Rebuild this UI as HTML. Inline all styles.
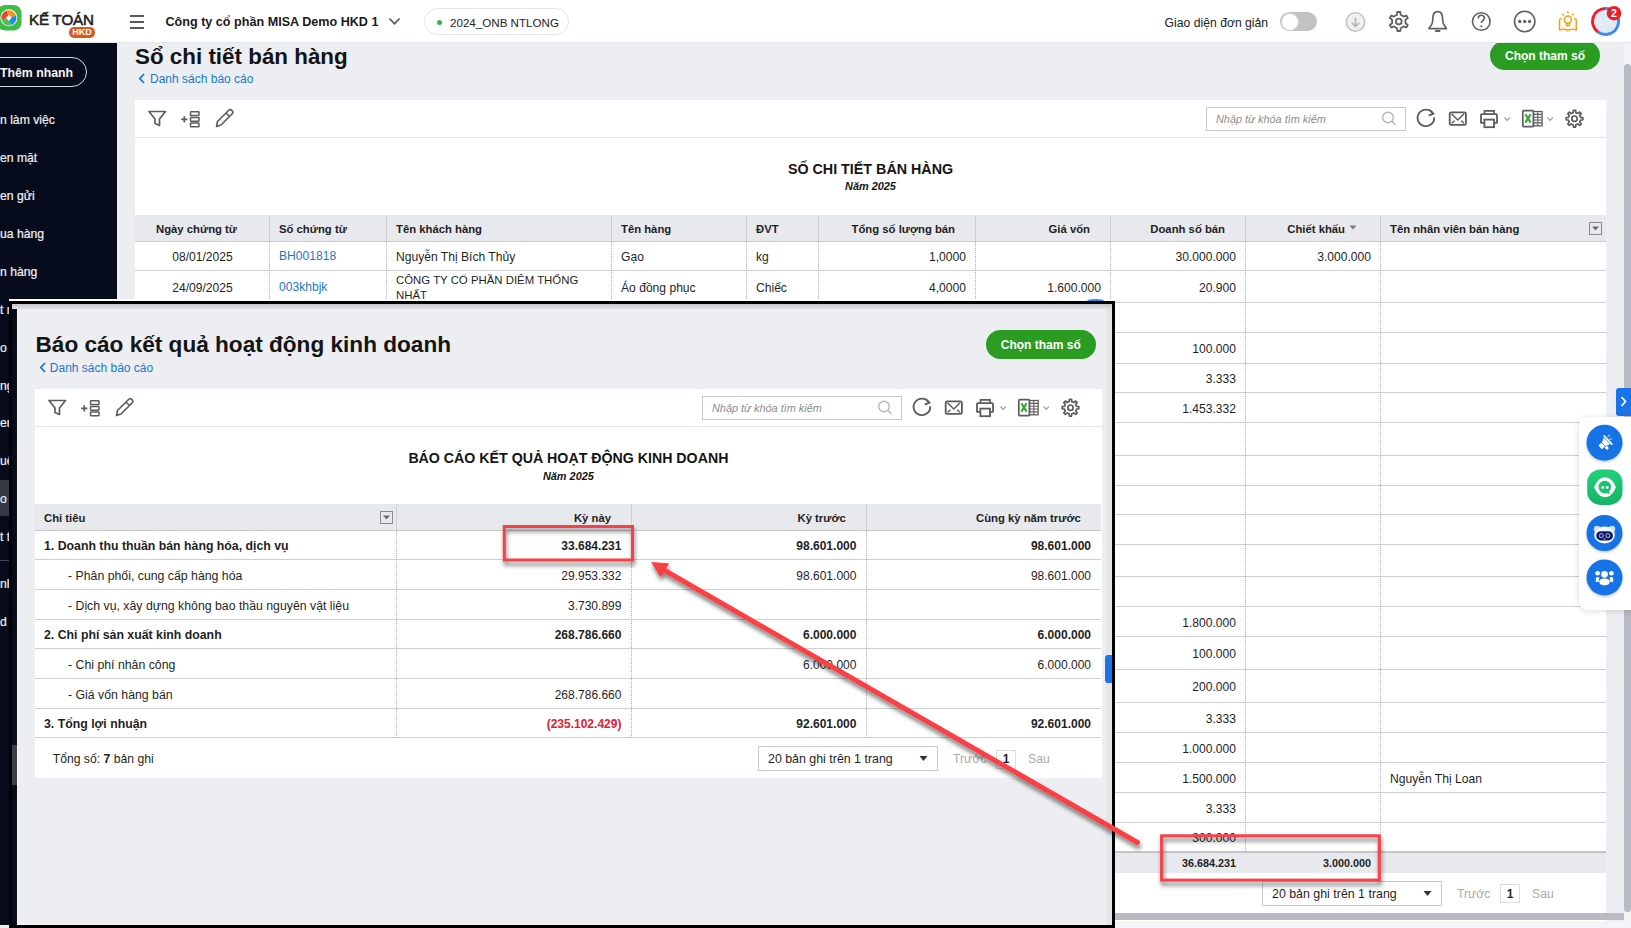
<!DOCTYPE html>
<html><head><meta charset="utf-8">
<style>
*{box-sizing:border-box;margin:0;padding:0}
html,body{width:1631px;height:928px;overflow:hidden;background:#eceef1;font-family:"Liberation Sans",sans-serif;color:#1f1f1f;position:relative}
.a{position:absolute}
.t{position:absolute;white-space:nowrap;line-height:1}
svg{overflow:visible}
</style></head><body>
<div class="a" style="left:0px;top:0px;width:1631px;height:43px;background:#fff;"></div>
<div class="a" style="left:0px;top:42px;width:1631px;height:1px;background:#e4e6ea;"></div>
<svg class="a" style="left:-3px;top:5px;" width="26" height="26" viewBox="0 0 26 26"><rect x="0" y="0" width="24.5" height="25.5" rx="8" fill="#3fbb47"/><circle cx="11.9" cy="12.8" r="8.5" fill="#fff"/><path d="M11.9 12.8 L9.93 5.46 A7.6 7.6 0 0 1 19.24 10.83 Z" fill="#f7941d"/><path d="M11.9 12.8 L19.24 10.83 A7.6 7.6 0 0 1 13.87 20.14 Z" fill="#1e88e5"/><path d="M11.9 12.8 L13.87 20.14 A7.6 7.6 0 0 1 4.56 14.77 Z" fill="#43c453"/><path d="M11.9 12.8 L4.56 14.77 A7.6 7.6 0 0 1 9.93 5.46 Z" fill="#ef4136"/><rect x="9.8" y="10.700000000000001" width="4.2" height="4.2" fill="#fff" transform="rotate(45 11.9 12.8)"/></svg>
<div class="t" style="top:11.83px;font-size:15.2px;color:#222;left:29px;-webkit-text-stroke:0.55px #222;letter-spacing:-0.2px;">KẾ TOÁN</div>
<div class="a" style="left:69px;top:27px;width:26px;height:10.5px;background:#dc5a1e;border-radius:5px"></div>
<div class="t" style="top:28.38px;font-size:9px;font-weight:bold;color:#fff;left:69px;width:26px;text-align:center;">HKD</div>
<div class="a" style="left:130px;top:15px;width:13.5px;height:1.6px;background:#5a5a5a;"></div>
<div class="a" style="left:130px;top:21px;width:13.5px;height:1.6px;background:#5a5a5a;"></div>
<div class="a" style="left:130px;top:27px;width:13.5px;height:1.6px;background:#5a5a5a;"></div>
<div class="t" style="top:15.63px;font-size:12.6px;font-weight:bold;color:#1a1a1a;left:165.5px;">Công ty cổ phần MISA Demo HKD 1</div>
<svg class="a" style="left:388px;top:17px;" width="13" height="9" viewBox="0 0 13 9"><path d="M1.5 1.5 L6.5 6.8 L11.5 1.5" fill="none" stroke="#555" stroke-width="1.6"/></svg>
<div class="a" style="left:424px;top:8px;width:145px;height:27px;background:#fff;border:1px solid #e3e4e6;border-radius:14px"></div>
<div class="a" style="left:437px;top:19.5px;width:5px;height:5px;background:#3cb04a;border-radius:50%"></div>
<div class="t" style="top:17.18px;font-size:11.6px;color:#222;left:450px;">2024_ONB NTLONG</div>
<div class="t" style="top:17.27px;font-size:12.2px;color:#222;left:1164.6px;">Giao diện đơn giản</div>
<div class="a" style="left:1280px;top:12.3px;width:37px;height:18.5px;background:#c2c2c2;border-radius:9.5px"></div>
<div class="a" style="left:1280.5px;top:12.6px;width:18px;height:18px;background:#fff;border-radius:50%;border:1px solid #d0d0d0"></div>
<svg class="a" style="left:1345px;top:11.5px;" width="21" height="21" viewBox="0 0 21 21"><circle cx="10.5" cy="10" r="9.2" fill="#f0f0f0" stroke="#c4c4c4" stroke-width="1.6"/><path d="M10.5 5.5 V14 M6.8 10.8 L10.5 14.3 L14.2 10.8" fill="none" stroke="#b5b5b5" stroke-width="1.6"/></svg>
<svg class="a" style="left:0px;top:0px;" width="1" height="1" viewBox="0 0 1 1"></svg>
<svg class="a" style="left:0;top:0" width="1631" height="43"><path d="M1396.94 14.84 L1397.30 12.02 L1400.30 12.02 L1400.66 14.84 L1403.64 16.56 L1406.26 15.46 L1407.76 18.06 L1405.49 19.78 L1405.49 23.22 L1407.76 24.94 L1406.26 27.54 L1403.64 26.44 L1400.66 28.16 L1400.30 30.98 L1397.30 30.98 L1396.94 28.16 L1393.96 26.44 L1391.34 27.54 L1389.84 24.94 L1392.11 23.22 L1392.11 19.78 L1389.84 18.06 L1391.34 15.46 L1393.96 16.56Z" fill="none" stroke="#606060" stroke-width="1.8" stroke-linejoin="round"/><circle cx="1398.8" cy="21.5" r="2.88" fill="none" stroke="#606060" stroke-width="1.8"/><path d="M1429 28.6 C1429 27 1432 26 1432.5 22 L1432.9 17.2 C1433.2 13.6 1435 11.6 1437.7 11.6 C1440.4 11.6 1442.2 13.6 1442.5 17.2 L1442.9 22 C1443.4 26 1446.4 27 1446.4 28.6 Z" fill="none" stroke="#606060" stroke-width="1.7" stroke-linejoin="round"/><path d="M1435.8 31 H1439.6" stroke="#606060" stroke-width="1.8" stroke-linecap="round"/><circle cx="1481.3" cy="21.5" r="8.8" fill="none" stroke="#606060" stroke-width="1.6"/><path d="M1478.3 18.5 C1478.3 16.3 1479.7 15.3 1481.3 15.3 C1483 15.3 1484.3 16.4 1484.3 18.2 C1484.3 20.5 1481.3 20.6 1481.3 23" fill="none" stroke="#606060" stroke-width="1.6"/><circle cx="1481.3" cy="26.3" r="1" fill="#606060"/><circle cx="1524.7" cy="21.5" r="10.2" fill="none" stroke="#606060" stroke-width="1.6"/><circle cx="1519.8" cy="21.5" r="1.65" fill="#606060"/><circle cx="1524.7" cy="21.5" r="1.65" fill="#606060"/><circle cx="1529.6" cy="21.5" r="1.65" fill="#606060"/><g fill="none" stroke="#f5a11d" stroke-width="1.6" stroke-linecap="round" stroke-linejoin="round"><path d="M1561 18.5 C1560 18.8 1559.5 19.5 1559.5 20.5 V30 C1562.5 28.8 1565.3 29 1567.9 30.6 C1570.5 29 1573.3 28.8 1576.3 30 V20.5 C1576.3 19.5 1575.8 18.8 1574.8 18.5"/><circle cx="1567.9" cy="19.6" r="3.6"/><path d="M1566.4 23.3 V25.6 H1569.4 V23.3"/></g><circle cx="1567.9" cy="12.2" r="0.95" fill="#f5a11d"/><path d="M1562.6 14.3 L1563.4 14.9 M1573.2 14.3 L1572.4 14.9" stroke="#f5a11d" stroke-width="1.5" stroke-linecap="round"/><circle cx="1605.5" cy="21.4" r="13" fill="#dfeaf4"/><path d="M1605.5 8.4 A13 13 0 1 1 1598 32" fill="none" stroke="#3b8beb" stroke-width="3"/><path d="M1598 32 A13 13 0 0 1 1605.5 8.4" fill="none" stroke="#e8202a" stroke-width="3"/><text x="1605.5" y="25" font-size="10" font-weight="bold" fill="#fff" fill-opacity="0.35" text-anchor="middle" font-family="Liberation Sans">LA</text><circle cx="1614" cy="13.2" r="7.3" fill="#e8202a"/><text x="1614" y="17" font-size="10.5" font-weight="bold" fill="#fff" text-anchor="middle" font-family="Liberation Sans">2</text></svg>
<div class="a" style="left:0px;top:43px;width:117px;height:885px;background:#070c1c;"></div>
<div class="a" style="left:-30px;top:57px;width:117px;height:29.5px;background:transparent;border:1.5px solid #d5d8de;border-radius:15px"></div>
<div class="t" style="top:66.89px;font-size:12.3px;font-weight:bold;color:#f4f4f4;left:0px;">Thêm nhanh</div>
<div class="a" style="left:0px;top:480px;width:117px;height:36px;background:#343944;"></div>
<div class="a" style="left:0px;top:559.5px;width:117px;height:1px;background:#444a55;"></div>
<div class="t" style="top:113.87px;font-size:12.2px;color:#f0f0f2;left:0px;-webkit-text-stroke:0.2px #f0f0f2;">n làm việc</div>
<div class="t" style="top:152.37px;font-size:12.2px;color:#f0f0f2;left:0px;-webkit-text-stroke:0.2px #f0f0f2;">en mặt</div>
<div class="t" style="top:190.37px;font-size:12.2px;color:#f0f0f2;left:0px;-webkit-text-stroke:0.2px #f0f0f2;">en gửi</div>
<div class="t" style="top:227.87px;font-size:12.2px;color:#f0f0f2;left:0px;-webkit-text-stroke:0.2px #f0f0f2;">ua hàng</div>
<div class="t" style="top:265.87px;font-size:12.2px;color:#f0f0f2;left:0px;-webkit-text-stroke:0.2px #f0f0f2;">n hàng</div>
<div class="t" style="top:303.87px;font-size:12.2px;color:#f0f0f2;left:0px;-webkit-text-stroke:0.2px #f0f0f2;">t r</div>
<div class="t" style="top:341.87px;font-size:12.2px;color:#f0f0f2;left:0px;-webkit-text-stroke:0.2px #f0f0f2;">o</div>
<div class="t" style="top:379.87px;font-size:12.2px;color:#f0f0f2;left:0px;-webkit-text-stroke:0.2px #f0f0f2;">ng</div>
<div class="t" style="top:416.87px;font-size:12.2px;color:#f0f0f2;left:0px;-webkit-text-stroke:0.2px #f0f0f2;">en</div>
<div class="t" style="top:454.87px;font-size:12.2px;color:#f0f0f2;left:0px;-webkit-text-stroke:0.2px #f0f0f2;">uế</div>
<div class="t" style="top:492.87px;font-size:12.2px;color:#f0f0f2;left:0px;-webkit-text-stroke:0.2px #f0f0f2;">o</div>
<div class="t" style="top:530.87px;font-size:12.2px;color:#f0f0f2;left:0px;-webkit-text-stroke:0.2px #f0f0f2;">t tổ</div>
<div class="t" style="top:577.87px;font-size:12.2px;color:#f0f0f2;left:0px;-webkit-text-stroke:0.2px #f0f0f2;">nh</div>
<div class="t" style="top:615.87px;font-size:12.2px;color:#f0f0f2;left:0px;-webkit-text-stroke:0.2px #f0f0f2;">d</div>
<div class="a" style="left:117px;top:43px;width:1514px;height:885px;background:#eceef1;"></div>
<div class="t" style="top:45.54px;font-size:22.4px;font-weight:bold;color:#141414;left:135px;">Sổ chi tiết bán hàng</div>
<svg class="a" style="left:138px;top:73px;" width="8" height="11" viewBox="0 0 8 11"><path d="M6 1 L1.8 5.5 L6 10" fill="none" stroke="#1b78c8" stroke-width="1.8"/></svg>
<div class="t" style="top:72.84px;font-size:12px;color:#1b78c8;left:150px;">Danh sách báo cáo</div>
<div class="a" style="left:1490px;top:43px;width:110px;height:27px;overflow:hidden"><div class="a" style="left:0;top:-2px;width:110px;height:29px;border-radius:14.5px;background:#2b9c22"></div></div>
<div class="t" style="top:50.14px;font-size:12px;font-weight:bold;color:#fff;left:1145px;width:800px;text-align:center;">Chọn tham số</div>
<div class="a" style="left:135px;top:100px;width:1471px;height:821px;background:#fff;"></div>
<svg class="a" style="left:0;top:0" width="1631" height="928"><path d="M149 111.5 H165.5 L159.5 119 V125.5 L155 123.5 V119 Z" fill="none" stroke="#5c5c5c" stroke-width="1.7" stroke-linejoin="round"/><path d="M184.3 116.3 V122.5 M181.2 119.4 H187.4" stroke="#5c5c5c" stroke-width="1.7"/><rect x="190.5" y="111.8" width="8.5" height="3.8" rx="0.6" fill="none" stroke="#5c5c5c" stroke-width="1.5"/><rect x="190.5" y="117.4" width="8.5" height="3.8" rx="0.6" fill="none" stroke="#5c5c5c" stroke-width="1.5"/><rect x="190.5" y="123" width="8.5" height="3.8" rx="0.6" fill="none" stroke="#5c5c5c" stroke-width="1.5"/><path d="M216.5 126.5 L217.5 121.5 L228.5 110.5 C229.5 109.5 231 109.5 232 110.5 C233 111.5 233 113 232 114 L221 125 Z M226 113 L229.5 116.5" fill="none" stroke="#5c5c5c" stroke-width="1.6" stroke-linejoin="round"/></svg>
<div class="a" style="left:135px;top:136.5px;width:1471px;height:1px;background:#e3e4e7;"></div>
<div class="a" style="left:1206px;top:106.5px;width:200px;height:24.5px;background:#fff;border:1px solid #c9cacd"></div>
<div class="t" style="top:113.77px;font-size:10.9px;font-style:italic;color:#8c8c8c;left:1216px;">Nhập từ khóa tìm kiếm</div>
<svg class="a" style="left:0;top:0" width="1631" height="928"><circle cx="1388" cy="117.5" r="5.3" fill="none" stroke="#b5b5b5" stroke-width="1.4"/><path d="M1392 121.5 L1395.5 125" stroke="#b5b5b5" stroke-width="1.4"/><path d="M1432.8 113.2 A8.3 8.3 0 1 0 1434.2 117.2" fill="none" stroke="#5c5c5c" stroke-width="1.8"/><path d="M1429.5 110 L1433.4 113.6 L1428.7 115.6" fill="none" stroke="#5c5c5c" stroke-width="1.8"/><rect x="1449.7" y="112.4" width="16.2" height="12.4" rx="1.6" fill="none" stroke="#5c5c5c" stroke-width="1.8"/><path d="M1451.5 113.8 L1457.8 120 L1464.1 113.8 M1451.7 123.2 L1454.5 120.8 M1463.9 123.2 L1461.1 120.8" fill="none" stroke="#5c5c5c" stroke-width="1.5"/><path d="M1484.5 114.5 V110.8 H1494 V114.5" fill="none" stroke="#5c5c5c" stroke-width="1.7"/><path d="M1484 122.8 H1481 V115 Q1481 114.2 1481.8 114.2 H1496.2 Q1497 114.2 1497 115 V122.8 H1494" fill="none" stroke="#5c5c5c" stroke-width="1.8" stroke-linejoin="round"/><rect x="1484.4" y="119.6" width="9.6" height="7.6" fill="none" stroke="#5c5c5c" stroke-width="1.8"/><path d="M1504.5 117.5 L1507.2 120.3 L1509.9 117.5" fill="none" stroke="#a0a0a0" stroke-width="1.2"/><rect x="1533.5" y="111.5" width="8.6" height="14.3" fill="none" stroke="#5c5c5c" stroke-width="1.3"/><path d="M1537.8 111.5 V125.8 M1533.5 114.4 H1542.1 M1533.5 117.2 H1542.1 M1533.5 120 H1542.1 M1533.5 122.9 H1542.1" stroke="#5c5c5c" stroke-width="1.1"/><rect x="1522.8" y="110.6" width="10.6" height="16" rx="0.8" fill="#fff" stroke="#5c5c5c" stroke-width="1.7"/><path d="M1525.4 114.2 L1530.6 122.6 M1530.6 114.2 L1525.4 122.6" stroke="#2aa52a" stroke-width="2"/><path d="M1547.5 117.5 L1550.2 120.3 L1552.9 117.5" fill="none" stroke="#a0a0a0" stroke-width="1.2"/><path d="M1573.19 112.62 L1573.38 110.37 L1575.62 110.37 L1575.81 112.62 L1577.87 113.48 L1579.60 112.02 L1581.18 113.60 L1579.72 115.33 L1580.58 117.39 L1582.83 117.58 L1582.83 119.82 L1580.58 120.01 L1579.72 122.07 L1581.18 123.80 L1579.60 125.38 L1577.87 123.92 L1575.81 124.78 L1575.62 127.03 L1573.38 127.03 L1573.19 124.78 L1571.13 123.92 L1569.40 125.38 L1567.82 123.80 L1569.28 122.07 L1568.42 120.01 L1566.17 119.82 L1566.17 117.58 L1568.42 117.39 L1569.28 115.33 L1567.82 113.60 L1569.40 112.02 L1571.13 113.48Z" fill="none" stroke="#5c5c5c" stroke-width="1.7" stroke-linejoin="round"/><circle cx="1574.5" cy="118.7" r="2.69" fill="none" stroke="#5c5c5c" stroke-width="1.7"/></svg>
<div class="t" style="top:161.9px;font-size:14.3px;font-weight:bold;color:#141414;left:470.5px;width:800px;text-align:center;">SỐ CHI TIẾT BÁN HÀNG</div>
<div class="t" style="top:181.37px;font-size:10.9px;font-weight:bold;font-style:italic;color:#141414;left:470.5px;width:800px;text-align:center;">Năm 2025</div>
<div class="a" style="left:135px;top:215px;width:1471px;height:27px;background:#e7e9ed;"></div>
<div class="a" style="left:135px;top:241px;width:1471px;height:1px;background:#c9cacd;"></div>
<div class="a" style="left:269px;top:215px;width:1px;height:26px;background:#cdd0d5;"></div>
<div class="a" style="left:386px;top:215px;width:1px;height:26px;background:#cdd0d5;"></div>
<div class="a" style="left:611px;top:215px;width:1px;height:26px;background:#cdd0d5;"></div>
<div class="a" style="left:746px;top:215px;width:1px;height:26px;background:#cdd0d5;"></div>
<div class="a" style="left:818px;top:215px;width:1px;height:26px;background:#cdd0d5;"></div>
<div class="a" style="left:975px;top:215px;width:1px;height:26px;background:#cdd0d5;"></div>
<div class="a" style="left:1110px;top:215px;width:1px;height:26px;background:#cdd0d5;"></div>
<div class="a" style="left:1245px;top:215px;width:1px;height:26px;background:#cdd0d5;"></div>
<div class="a" style="left:1380px;top:215px;width:1px;height:26px;background:#cdd0d5;"></div>
<div class="t" style="top:223.73px;font-size:11.3px;font-weight:bold;left:156px;">Ngày chứng từ</div>
<div class="t" style="top:223.73px;font-size:11.3px;font-weight:bold;left:279px;">Số chứng từ</div>
<div class="t" style="top:223.73px;font-size:11.3px;font-weight:bold;left:396px;">Tên khách hàng</div>
<div class="t" style="top:223.73px;font-size:11.3px;font-weight:bold;left:621px;">Tên hàng</div>
<div class="t" style="top:223.73px;font-size:11.3px;font-weight:bold;left:756px;">ĐVT</div>
<div class="t" style="top:223.73px;font-size:11.3px;font-weight:bold;right:676px;">Tổng số lượng bán</div>
<div class="t" style="top:223.73px;font-size:11.3px;font-weight:bold;right:541px;">Giá vốn</div>
<div class="t" style="top:223.73px;font-size:11.3px;font-weight:bold;right:406px;">Doanh số bán</div>
<div class="t" style="top:223.73px;font-size:11.3px;font-weight:bold;right:286px;">Chiết khấu</div>
<svg class="a" style="left:1349px;top:225px;" width="8" height="5" viewBox="0 0 8 5"><path d="M0.5 0.5 H7.5 L4 4.5 Z" fill="#7a7a7a"/></svg>
<div class="t" style="top:223.73px;font-size:11.3px;font-weight:bold;left:1390px;">Tên nhân viên bán hàng</div>
<svg class="a" style="left:1588.5px;top:221.5px;" width="13" height="13" viewBox="0 0 13 13"><rect x="0.5" y="0.5" width="12" height="12" fill="none" stroke="#8a8a8a" stroke-width="1"/><path d="M3 4.5 H10 L6.5 8.5 Z" fill="#6a6a6a"/></svg>
<div class="a" style="left:135px;top:270px;width:1471px;height:1px;background:#cfcfd1;"></div>
<div class="a" style="left:135px;top:302px;width:1471px;height:1px;background:#cfcfd1;"></div>
<div class="a" style="left:135px;top:332px;width:1471px;height:1px;background:#cfcfd1;"></div>
<div class="a" style="left:135px;top:363px;width:1471px;height:1px;background:#cfcfd1;"></div>
<div class="a" style="left:135px;top:392px;width:1471px;height:1px;background:#cfcfd1;"></div>
<div class="a" style="left:135px;top:422px;width:1471px;height:1px;background:#cfcfd1;"></div>
<div class="a" style="left:135px;top:455px;width:1471px;height:1px;background:#cfcfd1;"></div>
<div class="a" style="left:135px;top:485px;width:1471px;height:1px;background:#cfcfd1;"></div>
<div class="a" style="left:135px;top:514px;width:1471px;height:1px;background:#cfcfd1;"></div>
<div class="a" style="left:135px;top:544px;width:1471px;height:1px;background:#cfcfd1;"></div>
<div class="a" style="left:135px;top:576px;width:1471px;height:1px;background:#cfcfd1;"></div>
<div class="a" style="left:135px;top:606px;width:1471px;height:1px;background:#cfcfd1;"></div>
<div class="a" style="left:135px;top:636px;width:1471px;height:1px;background:#cfcfd1;"></div>
<div class="a" style="left:135px;top:669px;width:1471px;height:1px;background:#cfcfd1;"></div>
<div class="a" style="left:135px;top:702px;width:1471px;height:1px;background:#cfcfd1;"></div>
<div class="a" style="left:135px;top:732px;width:1471px;height:1px;background:#cfcfd1;"></div>
<div class="a" style="left:135px;top:762px;width:1471px;height:1px;background:#cfcfd1;"></div>
<div class="a" style="left:135px;top:792px;width:1471px;height:1px;background:#cfcfd1;"></div>
<div class="a" style="left:135px;top:822px;width:1471px;height:1px;background:#cfcfd1;"></div>
<div class="a" style="left:135px;top:851px;width:1471px;height:1px;background:#cfcfd1;"></div>
<div class="a" style="left:269px;top:242px;width:0;height:609px;border-left:1px dotted #ababab"></div>
<div class="a" style="left:386px;top:242px;width:0;height:609px;border-left:1px dotted #ababab"></div>
<div class="a" style="left:611px;top:242px;width:0;height:609px;border-left:1px dotted #ababab"></div>
<div class="a" style="left:746px;top:242px;width:0;height:609px;border-left:1px dotted #ababab"></div>
<div class="a" style="left:818px;top:242px;width:0;height:609px;border-left:1px dotted #ababab"></div>
<div class="a" style="left:975px;top:242px;width:0;height:609px;border-left:1px dotted #ababab"></div>
<div class="a" style="left:1110px;top:242px;width:0;height:609px;border-left:1px dotted #ababab"></div>
<div class="a" style="left:1245px;top:242px;width:0;height:609px;border-left:1px dotted #ababab"></div>
<div class="a" style="left:1380px;top:242px;width:0;height:609px;border-left:1px dotted #ababab"></div>
<div class="t" style="top:251.26px;font-size:12.1px;left:-197.5px;width:800px;text-align:center;">08/01/2025</div>
<div class="t" style="top:250.46px;font-size:12.1px;color:#1b78c8;left:279px;">BH001818</div>
<div class="t" style="top:251.26px;font-size:12.1px;left:396px;">Nguyễn Thị Bích Thủy</div>
<div class="t" style="top:251.26px;font-size:12.1px;left:621px;">Gạo</div>
<div class="t" style="top:251.26px;font-size:12.1px;left:756px;">kg</div>
<div class="t" style="top:251.26px;font-size:12.1px;right:665px;">1,0000</div>
<div class="t" style="top:251.26px;font-size:12.1px;right:395px;">30.000.000</div>
<div class="t" style="top:251.26px;font-size:12.1px;right:260px;">3.000.000</div>
<div class="t" style="top:281.76px;font-size:12.1px;left:-197.5px;width:800px;text-align:center;">24/09/2025</div>
<div class="t" style="top:280.96px;font-size:12.1px;color:#1b78c8;left:279px;">003khbjk</div>
<div class="t" style="top:274.85px;font-size:11.4px;left:396px;">CÔNG TY CỔ PHẦN DIÊM THỐNG</div>
<div class="t" style="top:289.85px;font-size:11.4px;left:396px;">NHẤT</div>
<div class="t" style="top:281.76px;font-size:12.1px;left:621px;">Áo đồng phục</div>
<div class="t" style="top:281.76px;font-size:12.1px;left:756px;">Chiếc</div>
<div class="t" style="top:281.76px;font-size:12.1px;right:665px;">4,0000</div>
<div class="t" style="top:281.76px;font-size:12.1px;right:530px;">1.600.000</div>
<div class="t" style="top:281.76px;font-size:12.1px;right:395px;">20.900</div>
<div class="t" style="top:343.26px;font-size:12.1px;right:395px;">100.000</div>
<div class="t" style="top:373.26px;font-size:12.1px;right:395px;">3.333</div>
<div class="t" style="top:402.76px;font-size:12.1px;right:395px;">1.453.332</div>
<div class="t" style="top:616.76px;font-size:12.1px;right:395px;">1.800.000</div>
<div class="t" style="top:648.26px;font-size:12.1px;right:395px;">100.000</div>
<div class="t" style="top:681.26px;font-size:12.1px;right:395px;">200.000</div>
<div class="t" style="top:712.76px;font-size:12.1px;right:395px;">3.333</div>
<div class="t" style="top:742.76px;font-size:12.1px;right:395px;">1.000.000</div>
<div class="t" style="top:772.76px;font-size:12.1px;right:395px;">1.500.000</div>
<div class="t" style="top:802.76px;font-size:12.1px;right:395px;">3.333</div>
<div class="t" style="top:832.26px;font-size:12.1px;right:395px;">300.000</div>
<div class="t" style="top:772.76px;font-size:12.1px;left:1390px;">Nguyễn Thị Loan</div>
<div class="a" style="left:135px;top:851px;width:1471px;height:2px;background:#c3c5c9;"></div>
<div class="a" style="left:135px;top:853px;width:1471px;height:19.6px;background:#e7e9ed;"></div>
<div class="t" style="top:857.66px;font-size:10.8px;font-weight:bold;right:395px;">36.684.231</div>
<div class="t" style="top:857.66px;font-size:10.8px;font-weight:bold;right:260px;">3.000.000</div>
<div class="a" style="left:1262px;top:880.5px;width:179.5px;height:25px;background:#fff;border:1px solid #c9cacd"></div>
<div class="t" style="top:887.8px;font-size:12.4px;left:1272px;">20 bản ghi trên 1 trang</div>
<svg class="a" style="left:1422.5px;top:890.5px;" width="9" height="6" viewBox="0 0 9 6"><path d="M0.5 0 H8.5 L4.5 5 Z" fill="#333"/></svg>
<div class="t" style="top:887.97px;font-size:12.2px;color:#ababab;left:1457px;">Trước</div>
<div class="a" style="left:1500px;top:884.0px;width:20px;height:19px;background:#fff;border:1px solid #dcdcdc"></div>
<div class="t" style="top:887.84px;font-size:12px;font-weight:bold;left:1110px;width:800px;text-align:center;">1</div>
<div class="t" style="top:887.97px;font-size:12.2px;color:#ababab;left:1532px;">Sau</div>
<div class="a" style="left:135px;top:921px;width:1496px;height:7px;background:#f3f4f6;"></div>
<div class="a" style="left:1100px;top:913px;width:1522.5px;height:7px;background:#b8bbc4;border-radius:3.5px"></div>
<div class="a" style="left:1624px;top:43px;width:7px;height:885px;background:#f3f4f6;"></div>
<div class="a" style="left:1624px;top:64px;width:7px;height:848px;background:#b8bbc4;border-radius:3.5px"></div>
<div class="a" style="left:1616px;top:387.5px;width:15px;height:28.5px;background:#1a73e8;border-radius:3px 0 0 3px"></div>
<svg class="a" style="left:1620px;top:396px;" width="8" height="11" viewBox="0 0 8 11"><path d="M1.5 1 L5.5 5.5 L1.5 10" fill="none" stroke="#fff" stroke-width="1.8"/></svg>
<div class="a" style="left:1579px;top:417px;width:60px;height:193px;background:#fff;border-radius:8px;box-shadow:0 1px 6px rgba(0,0,0,0.15)"></div>
<svg class="a" style="left:0;top:0" width="1631" height="928"><defs><filter id="cs" x="-30%" y="-30%" width="160%" height="160%"><feDropShadow dx="0" dy="1.5" stdDeviation="1.2" flood-opacity="0.22"/></filter></defs><circle cx="1604.5" cy="442.7" r="18" fill="#1473e6" filter="url(#cs)"/><g transform="translate(1604.2 443.6) rotate(-43)"><path d="M5.2 -5.6 V5.6" stroke="#fff" stroke-width="1.7" stroke-linecap="round"/><path d="M-0.8 -2.6 L3.8 -4.6 V4.6 L-0.8 2.6 Z" fill="#fff"/><rect x="-5.6" y="-2.6" width="4.2" height="5.2" rx="0.8" fill="#fff"/><path d="M-2.6 3.2 H0.6 L0.2 6.6 H-2.2 Z" fill="#fff"/></g><path d="M1607.8 436.6 L1609.6 435.2 M1609.6 439.2 L1611.4 439" stroke="#fff" stroke-width="0.9" stroke-linecap="round"/><defs><linearGradient id="gg" x1="0" y1="0" x2="0" y2="1"><stop offset="0" stop-color="#22d07c"/><stop offset="1" stop-color="#16b566"/></linearGradient></defs><rect x="1587.2" y="469.4" width="35.3" height="35.5" rx="13" fill="url(#gg)"/><path d="M1594.2 487.3 C1597 480 1601 477.3 1605 477.3 C1609 477.3 1613 480 1615.9 487.3 C1613 494.5 1609 497.2 1605 497.2 C1601 497.2 1597 494.5 1594.2 487.3 Z" fill="#fff"/><circle cx="1604.8" cy="487" r="6.3" fill="#1cc272"/><path d="M1608.2 491.5 L1611.2 493.6 L1606.6 493.6 Z" fill="#1cc272"/><circle cx="1602.8" cy="487.5" r="1.4" fill="#fff"/><circle cx="1607.2" cy="487.5" r="1.4" fill="#fff"/><circle cx="1604.5" cy="533" r="18" fill="#1473e6" filter="url(#cs)"/><circle cx="1597" cy="529" r="3.2" fill="#cfe0fa"/><circle cx="1612" cy="529" r="3.2" fill="#cfe0fa"/><ellipse cx="1604.5" cy="535" rx="10.4" ry="8.4" fill="#f4f7fc"/><rect x="1596.2" y="531.2" width="16.8" height="9.2" rx="4.6" fill="#141a66"/><circle cx="1601.3" cy="535.6" r="2" fill="none" stroke="#9cc1ff" stroke-width="1"/><circle cx="1607.9" cy="535.6" r="2" fill="none" stroke="#9cc1ff" stroke-width="1"/><path d="M1603.2 538.6 Q1604.6 539.6 1606 538.6" stroke="#9cc1ff" stroke-width="0.7" fill="none"/><circle cx="1604.5" cy="577.4" r="18" fill="#1473e6" filter="url(#cs)"/><circle cx="1604.5" cy="574.3" r="3.4" fill="#fff"/><path d="M1599.3 581.6 C1599.3 579.4 1601.5 578.4 1604.5 578.4 C1607.5 578.4 1609.7 579.4 1609.7 581.6 C1609.7 584.4 1607.5 585.4 1604.5 585.4 C1601.5 585.4 1599.3 584.4 1599.3 581.6Z" fill="#fff"/><circle cx="1597.6" cy="573.2" r="2.3" fill="#fff"/><circle cx="1611.4" cy="573.2" r="2.3" fill="#fff"/><path d="M1595.8 582 V578.6 Q1595.8 577.2 1597.2 577.2 H1599.4 L1598.6 582 Z M1613.2 582 V578.6 Q1613.2 577.2 1611.8 577.2 H1609.6 L1610.4 582 Z" fill="#fff"/></svg>
<div class="a" style="left:9px;top:299px;width:1106px;height:2px;background:#fff;"></div>
<div class="a" style="left:9px;top:301px;width:1106px;height:627px;background:#000;"></div>
<div class="a" style="left:12px;top:304px;width:1100px;height:621px;background:#eceef1;"></div>
<div class="a" style="left:12px;top:304px;width:1100px;height:5px;background:linear-gradient(#c6c7c9,#dfe0e3);"></div>
<div class="a" style="left:12px;top:309px;width:5px;height:616px;background:#070c1c;"></div>
<div class="a" style="left:12px;top:745px;width:5px;height:40px;background:#3a3f4a;"></div>
<div class="a" style="left:17px;top:309px;width:1px;height:616px;background:#f7f8fa;"></div>
<div class="a" style="left:17px;top:924px;width:1095px;height:1px;background:#f7f8fa;"></div>
<div class="a" style="left:0px;top:925px;width:9px;height:3px;background:#eceef0;"></div>
<div class="t" style="top:333.57px;font-size:22.6px;font-weight:bold;color:#141414;left:35.5px;">Báo cáo kết quả hoạt động kinh doanh</div>
<svg class="a" style="left:38.5px;top:361.5px;" width="8" height="11" viewBox="0 0 8 11"><path d="M6 1 L1.8 5.5 L6 10" fill="none" stroke="#1b78c8" stroke-width="1.8"/></svg>
<div class="t" style="top:361.64px;font-size:12px;color:#1b78c8;left:49.8px;">Danh sách báo cáo</div>
<div class="a" style="left:986px;top:329.8px;width:109.5px;height:29px;background:#2b9c22;border-radius:14.5px"></div>
<div class="t" style="top:338.94px;font-size:12px;font-weight:bold;color:#fff;left:640.75px;width:800px;text-align:center;">Chọn tham số</div>
<div class="a" style="left:35px;top:389px;width:1067px;height:389px;background:#fff;"></div>
<svg class="a" style="left:0;top:0" width="1631" height="928"><path d="M49 400.5 H65.5 L59.5 408 V414.5 L55 412.5 V408 Z" fill="none" stroke="#5c5c5c" stroke-width="1.7" stroke-linejoin="round"/><path d="M84.3 405.3 V411.5 M81.2 408.4 H87.4" stroke="#5c5c5c" stroke-width="1.7"/><rect x="90.5" y="400.8" width="8.5" height="3.8" rx="0.6" fill="none" stroke="#5c5c5c" stroke-width="1.5"/><rect x="90.5" y="406.4" width="8.5" height="3.8" rx="0.6" fill="none" stroke="#5c5c5c" stroke-width="1.5"/><rect x="90.5" y="412" width="8.5" height="3.8" rx="0.6" fill="none" stroke="#5c5c5c" stroke-width="1.5"/><path d="M116.5 415.5 L117.5 410.5 L128.5 399.5 C129.5 398.5 131 398.5 132 399.5 C133 400.5 133 402 132 403 L121 414 Z M126 402 L129.5 405.5" fill="none" stroke="#5c5c5c" stroke-width="1.6" stroke-linejoin="round"/></svg>
<div class="a" style="left:35px;top:425.5px;width:1067px;height:1px;background:#e3e4e7;"></div>
<div class="a" style="left:702px;top:395.5px;width:200px;height:24.5px;background:#fff;border:1px solid #c9cacd"></div>
<div class="t" style="top:402.77px;font-size:10.9px;font-style:italic;color:#8c8c8c;left:712px;">Nhập từ khóa tìm kiếm</div>
<svg class="a" style="left:0;top:0" width="1631" height="928"><circle cx="884" cy="406.5" r="5.3" fill="none" stroke="#b5b5b5" stroke-width="1.4"/><path d="M888 410.5 L891.5 414" stroke="#b5b5b5" stroke-width="1.4"/><path d="M928.8 402.2 A8.3 8.3 0 1 0 930.2 406.2" fill="none" stroke="#5c5c5c" stroke-width="1.8"/><path d="M925.5 399 L929.4 402.6 L924.7 404.6" fill="none" stroke="#5c5c5c" stroke-width="1.8"/><rect x="945.7" y="401.4" width="16.2" height="12.4" rx="1.6" fill="none" stroke="#5c5c5c" stroke-width="1.8"/><path d="M947.5 402.8 L953.8 409 L960.1 402.8 M947.7 412.2 L950.5 409.8 M959.9 412.2 L957.1 409.8" fill="none" stroke="#5c5c5c" stroke-width="1.5"/><path d="M980.5 403.5 V399.8 H990 V403.5" fill="none" stroke="#5c5c5c" stroke-width="1.7"/><path d="M980 411.8 H977 V404 Q977 403.2 977.8 403.2 H992.2 Q993 403.2 993 404 V411.8 H990" fill="none" stroke="#5c5c5c" stroke-width="1.8" stroke-linejoin="round"/><rect x="980.4" y="408.6" width="9.6" height="7.6" fill="none" stroke="#5c5c5c" stroke-width="1.8"/><path d="M1000.5 406.5 L1003.2 409.3 L1005.9 406.5" fill="none" stroke="#a0a0a0" stroke-width="1.2"/><rect x="1029.5" y="400.5" width="8.6" height="14.3" fill="none" stroke="#5c5c5c" stroke-width="1.3"/><path d="M1033.8 400.5 V414.8 M1029.5 403.4 H1038.1 M1029.5 406.2 H1038.1 M1029.5 409 H1038.1 M1029.5 411.9 H1038.1" stroke="#5c5c5c" stroke-width="1.1"/><rect x="1018.8" y="399.6" width="10.6" height="16" rx="0.8" fill="#fff" stroke="#5c5c5c" stroke-width="1.7"/><path d="M1021.4 403.2 L1026.6 411.6 M1026.6 403.2 L1021.4 411.6" stroke="#2aa52a" stroke-width="2"/><path d="M1043.5 406.5 L1046.2 409.3 L1048.9 406.5" fill="none" stroke="#a0a0a0" stroke-width="1.2"/><path d="M1069.19 401.62 L1069.38 399.37 L1071.62 399.37 L1071.81 401.62 L1073.87 402.48 L1075.60 401.02 L1077.18 402.60 L1075.72 404.33 L1076.58 406.39 L1078.83 406.58 L1078.83 408.82 L1076.58 409.01 L1075.72 411.07 L1077.18 412.80 L1075.60 414.38 L1073.87 412.92 L1071.81 413.78 L1071.62 416.03 L1069.38 416.03 L1069.19 413.78 L1067.13 412.92 L1065.40 414.38 L1063.82 412.80 L1065.28 411.07 L1064.42 409.01 L1062.17 408.82 L1062.17 406.58 L1064.42 406.39 L1065.28 404.33 L1063.82 402.60 L1065.40 401.02 L1067.13 402.48Z" fill="none" stroke="#5c5c5c" stroke-width="1.7" stroke-linejoin="round"/><circle cx="1070.5" cy="407.7" r="2.69" fill="none" stroke="#5c5c5c" stroke-width="1.7"/></svg>
<div class="t" style="top:451.28px;font-size:14.2px;font-weight:bold;color:#141414;left:168.4px;width:800px;text-align:center;">BÁO CÁO KẾT QUẢ HOẠT ĐỘNG KINH DOANH</div>
<div class="t" style="top:470.77px;font-size:10.9px;font-weight:bold;font-style:italic;color:#141414;left:168.4px;width:800px;text-align:center;">Năm 2025</div>
<div class="a" style="left:35px;top:504px;width:1066px;height:26.5px;background:#e7e9ed;"></div>
<div class="a" style="left:35px;top:530px;width:1066px;height:1px;background:#c9cacd;"></div>
<div class="a" style="left:396px;top:504px;width:1px;height:26px;background:#cdd0d5;"></div>
<div class="a" style="left:631px;top:504px;width:1px;height:26px;background:#cdd0d5;"></div>
<div class="a" style="left:866px;top:504px;width:1px;height:26px;background:#cdd0d5;"></div>
<div class="t" style="top:513.43px;font-size:11.3px;font-weight:bold;left:44px;">Chỉ tiêu</div>
<svg class="a" style="left:379.5px;top:511px;" width="13" height="13" viewBox="0 0 13 13"><rect x="0.5" y="0.5" width="12" height="12" fill="none" stroke="#8a8a8a" stroke-width="1"/><path d="M3 4.5 H10 L6.5 8.5 Z" fill="#6a6a6a"/></svg>
<div class="t" style="top:513.43px;font-size:11.3px;font-weight:bold;right:1020px;">Kỳ này</div>
<div class="t" style="top:513.43px;font-size:11.3px;font-weight:bold;right:785.3px;">Kỳ trước</div>
<div class="t" style="top:513.43px;font-size:11.3px;font-weight:bold;right:550.3px;">Cùng kỳ năm trước</div>
<div class="a" style="left:35px;top:559px;width:1066px;height:1px;background:#cfcfd1;"></div>
<div class="a" style="left:35px;top:589px;width:1066px;height:1px;background:#cfcfd1;"></div>
<div class="a" style="left:35px;top:619px;width:1066px;height:1px;background:#cfcfd1;"></div>
<div class="a" style="left:35px;top:648px;width:1066px;height:1px;background:#cfcfd1;"></div>
<div class="a" style="left:35px;top:678px;width:1066px;height:1px;background:#cfcfd1;"></div>
<div class="a" style="left:35px;top:708px;width:1066px;height:1px;background:#cfcfd1;"></div>
<div class="a" style="left:35px;top:737px;width:1066px;height:1px;background:#cfcfd1;"></div>
<div class="a" style="left:396px;top:531px;width:0;height:206.5px;border-left:1px dotted #ababab"></div>
<div class="a" style="left:631px;top:531px;width:0;height:206.5px;border-left:1px dotted #ababab"></div>
<div class="a" style="left:866px;top:531px;width:0;height:206.5px;border-left:1px dotted #ababab"></div>
<div class="t" style="top:539.69px;font-size:12.3px;font-weight:bold;left:44px;">1. Doanh thu thuần bán hàng hóa, dịch vụ</div>
<div class="t" style="top:539.94px;font-size:12px;font-weight:bold;right:1009.6px;">33.684.231</div>
<div class="t" style="top:539.94px;font-size:12px;font-weight:bold;right:774.6px;">98.601.000</div>
<div class="t" style="top:539.94px;font-size:12px;font-weight:bold;right:540px;">98.601.000</div>
<div class="t" style="top:570.19px;font-size:12.3px;left:68px;">- Phân phối, cung cấp hàng hóa</div>
<div class="t" style="top:570.24px;font-size:12px;right:1009.6px;">29.953.332</div>
<div class="t" style="top:570.24px;font-size:12px;right:774.6px;">98.601.000</div>
<div class="t" style="top:570.24px;font-size:12px;right:540px;">98.601.000</div>
<div class="t" style="top:600.19px;font-size:12.3px;left:68px;">- Dịch vụ, xây dựng không bao thầu nguyên vật liệu</div>
<div class="t" style="top:600.24px;font-size:12px;right:1009.6px;">3.730.899</div>
<div class="t" style="top:628.69px;font-size:12.3px;font-weight:bold;left:44px;">2. Chi phí sản xuất kinh doanh</div>
<div class="t" style="top:628.94px;font-size:12px;font-weight:bold;right:1009.6px;">268.786.660</div>
<div class="t" style="top:628.94px;font-size:12px;font-weight:bold;right:774.6px;">6.000.000</div>
<div class="t" style="top:628.94px;font-size:12px;font-weight:bold;right:540px;">6.000.000</div>
<div class="t" style="top:659.19px;font-size:12.3px;left:68px;">- Chi phí nhân công</div>
<div class="t" style="top:659.24px;font-size:12px;right:774.6px;">6.000.000</div>
<div class="t" style="top:659.24px;font-size:12px;right:540px;">6.000.000</div>
<div class="t" style="top:689.19px;font-size:12.3px;left:68px;">- Giá vốn hàng bán</div>
<div class="t" style="top:689.24px;font-size:12px;right:1009.6px;">268.786.660</div>
<div class="t" style="top:717.69px;font-size:12.3px;font-weight:bold;left:44px;">3. Tổng lợi nhuận</div>
<div class="t" style="top:717.94px;font-size:12px;font-weight:bold;color:#e5202e;right:1009.6px;">(235.102.429)</div>
<div class="t" style="top:717.94px;font-size:12px;font-weight:bold;right:774.6px;">92.601.000</div>
<div class="t" style="top:717.94px;font-size:12px;font-weight:bold;right:540px;">92.601.000</div>
<div class="t" style="top:752.67px;font-size:12.2px;left:52.7px;">Tổng số: <b>7</b> bản ghi</div>
<div class="a" style="left:758px;top:746px;width:179.5px;height:25px;background:#fff;border:1px solid #c9cacd"></div>
<div class="t" style="top:753.3px;font-size:12.4px;left:768px;">20 bản ghi trên 1 trang</div>
<svg class="a" style="left:918.5px;top:756px;" width="9" height="6" viewBox="0 0 9 6"><path d="M0.5 0 H8.5 L4.5 5 Z" fill="#333"/></svg>
<div class="t" style="top:753.47px;font-size:12.2px;color:#ababab;left:953px;">Trước</div>
<div class="a" style="left:996px;top:749.5px;width:20px;height:19px;background:#fff;border:1px solid #dcdcdc"></div>
<div class="t" style="top:753.34px;font-size:12px;font-weight:bold;left:606px;width:800px;text-align:center;">1</div>
<div class="t" style="top:753.47px;font-size:12.2px;color:#ababab;left:1028px;">Sau</div>
<div class="a" style="left:1106px;top:309px;width:6px;height:616px;background:#e4e5e9;"></div>
<div class="a" style="left:1105px;top:655px;width:7px;height:28px;background:#1a73e8;border-radius:3px 0 0 3px"></div>
<div class="a" style="left:1087px;top:298.6px;width:17px;height:2.2px;background:#3a86ea;border-radius:50% 50% 0 0/100% 100% 0 0"></div>
<svg class="a" style="left:0;top:0" width="1631" height="928"><defs><filter id="sh" x="-20%" y="-20%" width="140%" height="140%"><feGaussianBlur in="SourceAlpha" stdDeviation="2.2"/><feOffset dx="1" dy="3.5" result="o"/><feComponentTransfer><feFuncA type="linear" slope="0.5"/></feComponentTransfer><feMerge><feMergeNode/><feMergeNode in="SourceGraphic"/></feMerge></filter></defs><g filter="url(#sh)"><rect x="504.3" y="526.5" width="128.2" height="33.5" fill="none" stroke="#f83f45" stroke-width="3"/><rect x="1161.6" y="835.8" width="217.7" height="44.3" fill="none" stroke="#f83f45" stroke-width="3"/><path d="M663 569.5 L1137.5 842.5" stroke="#f83f45" stroke-width="5" stroke-linecap="round"/><path d="M651.8 562.6 L668.5 563.8 L660.4 576.2 Z" fill="#f83f45" stroke="#f83f45" stroke-width="1" stroke-linejoin="round"/></g></svg>
</body></html>
